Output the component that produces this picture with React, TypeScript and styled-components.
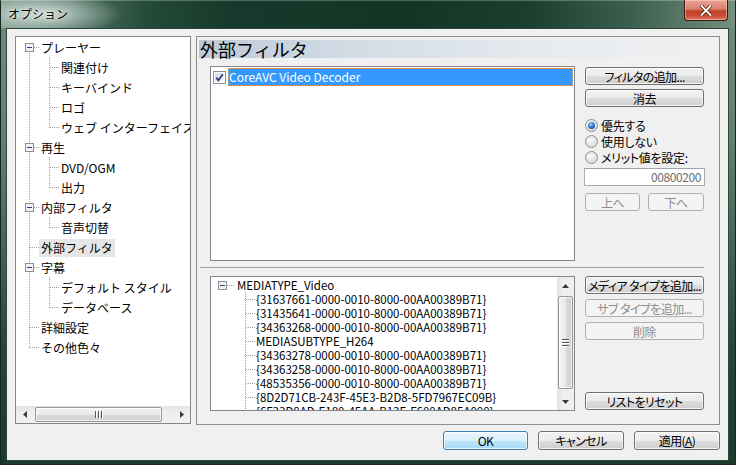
import React from 'react';
import styled, { createGlobalStyle } from 'styled-components';

const FONT = `"Noto Sans CJK JP", "Noto Sans", sans-serif`;

const GlobalStyle = createGlobalStyle`
  html, body { margin: 0; padding: 0; width: 736px; height: 465px; overflow: hidden; background: #1d3a2c; }
  * { box-sizing: border-box; }
`;

const Window = styled.div`
  width: 736px;
  height: 465px;
  display: flex;
  flex-direction: column;
  font-family: ${FONT};
  background: linear-gradient(180deg, #6f8b7d 0%, #62806f 30%, #416152 55%, #25453a 75%, #1b3a2c 100%);
  box-shadow: inset 0 0 0 1px #16281f;
`;

const TitleBar = styled.div`
  height: 28px;
  flex: none;
  display: flex;
  align-items: flex-start;
  justify-content: space-between;
  padding-left: 8px;
  background:
    radial-gradient(ellipse 80px 22px at 42px 14px, rgba(226, 236, 231, 0.85), rgba(226, 236, 231, 0) 100%),
    linear-gradient(90deg, #7d988b 0%, #57786a 9%, #244a39 20%, #15392a 32%, #123526 55%, #1a3f2f 72%, #3c6050 86%, #75907f 100%);
  box-shadow: inset 0 1px 0 rgba(255,255,255,0.25), inset 1px 0 0 #16281f, inset -1px 0 0 #16281f;
`;

const TitleText = styled.div`
  font-size: 12px;
  line-height: 28px;
  color: #000;
  text-shadow: 0 0 6px rgba(255,255,255,0.9), 0 0 2px rgba(255,255,255,0.8);
`;

const CloseButton = styled.div`
  width: 44px;
  height: 21px;
  margin-right: 8px;
  display: flex;
  align-items: center;
  justify-content: center;
  border: 1px solid #3e1610;
  border-top: none;
  border-radius: 0 0 4px 4px;
  background: linear-gradient(180deg, #e8a596 0%, #d8806c 45%, #c0412a 55%, #c94e32 80%, #d9806a 100%);
  box-shadow: inset 0 0 0 1px rgba(255, 220, 210, 0.45);
`;

const FrameBody = styled.div`
  flex: 1;
  display: flex;
  padding: 0 7px 4px 6px;
  min-height: 0;
`;

const Client = styled.div`
  flex: 1;
  display: flex;
  flex-direction: column;
  background: #f0f0f0;
  border: 1px solid #2f473b;
  padding: 7px 8px 0 8px;
`;

const PanelsRow = styled.div`
  display: flex;
  align-items: flex-start;
  gap: 5px;
  height: 389px;
`;

const LeftPanel = styled.div`
  width: 176px;
  height: 388px;
  display: flex;
  flex-direction: column;
  background: #fff;
  border: 1px solid #828790;
`;

const LeftTree = styled.div`
  flex: 1;
  overflow: hidden;
  padding-left: 3px;
`;

const LTreeRow = styled.div`
  display: flex;
  align-items: center;
  height: 20px;
  white-space: nowrap;
`;

const LLabel = styled.span<{ $selected?: boolean }>`
  font-size: 12px;
  line-height: 18px;
  height: 18px;
  padding: 0 2px;
  margin-top: 1px;
  color: #000;
  background: ${(p) => (p.$selected ? '#e6e6e6' : 'transparent')};
`;

const ConnSvg = styled.svg`
  display: block;
  flex: none;
`;

const HScroll = styled.div`
  height: 17px;
  flex: none;
  display: flex;
  align-items: center;
  background: linear-gradient(180deg, #e3e3e3 0%, #efefef 40%, #f0f0f0 100%);
`;

const ScrollArrow = styled.div<{ $w: number; $h: number }>`
  width: ${(p) => p.$w}px;
  height: ${(p) => p.$h}px;
  flex: none;
  display: flex;
  align-items: center;
  justify-content: center;
`;

const HThumb = styled.div`
  width: 127px;
  height: 15px;
  margin-left: 1px;
  border: 1px solid #979797;
  border-radius: 2px;
  background: linear-gradient(180deg, #f4f4f4 0%, #e9e9e9 50%, #d9d9d9 51%, #d2d2d2 100%);
  box-shadow: inset 0 0 0 1px rgba(255,255,255,0.7);
  display: flex;
  align-items: center;
  justify-content: center;
  gap: 2px;
`;

const VThumb = styled.div`
  width: 15px;
  height: 93px;
  margin: 2px auto 0;
  border: 1px solid #979797;
  border-radius: 2px;
  background: linear-gradient(90deg, #f4f4f4 0%, #e9e9e9 50%, #d9d9d9 51%, #d2d2d2 100%);
  box-shadow: inset 0 0 0 1px rgba(255,255,255,0.7);
  display: flex;
  flex-direction: column;
  align-items: center;
  justify-content: center;
  gap: 2px;
`;

const GripH = styled.span`
  width: 1px;
  height: 7px;
  background: #555;
  box-shadow: 1px 0 0 #fff;
`;

const GripV = styled.span`
  width: 7px;
  height: 1px;
  background: #555;
  box-shadow: 0 1px 0 #fff;
`;

const Flex1 = styled.div`
  flex: 1;
`;

const RightPanel = styled.div`
  width: 524px;
  height: 389px;
  border: 1px solid #8e8f8f;
  padding: 3px 2px 0 2px;
  display: flex;
  flex-direction: column;
`;

const Header = styled.div`
  height: 18px;
  font-size: 18px;
  line-height: 18px;
  padding-left: 1px;
  color: #000;
  background: linear-gradient(90deg, #bccad8 0%, #d3dce5 30%, #e8ecf0 70%, #f0f0f0 100%);
  white-space: nowrap;
`;

const Section = styled.div<{ $mt: number }>`
  display: flex;
  gap: 10px;
  padding-left: 11px;
  margin-top: ${(p) => p.$mt}px;
`;

const ListBox = styled.div<{ $h: number }>`
  width: 365px;
  height: ${(p) => p.$h}px;
  border: 1px solid #828790;
  background: #fff;
  display: flex;
  overflow: hidden;
`;

const FilterList = styled.div`
  flex: 1;
  padding-top: 1px;
`;

const FilterRow = styled.div`
  display: flex;
  align-items: center;
  height: 18px;
  padding-left: 2px;
  gap: 2px;
`;

const FilterLabel = styled.div`
  flex: 1;
  height: 18px;
  margin-right: 1px;
  background: #3399ff;
  color: #fff;
  border: 1px dotted #f2a45c;
  font-size: 12px;
  line-height: 16px;
  white-space: nowrap;
`;

const SideColumn = styled.div`
  width: 119px;
  display: flex;
  flex-direction: column;
`;

const Button = styled.div<{ $w?: number; $h?: number; $mt?: number; $disabled?: boolean; $focused?: boolean }>`
  width: ${(p) => p.$w ?? 119}px;
  height: ${(p) => p.$h ?? 18}px;
  margin-top: ${(p) => p.$mt ?? 0}px;
  flex: none;
  display: flex;
  align-items: center;
  justify-content: center;
  border-radius: 3px;
  font-size: 12px;
  font-feature-settings: "palt";
  letter-spacing: -0.6px;
  white-space: nowrap;
  border: 1px solid ${(p) => (p.$disabled ? '#adb2b5' : p.$focused ? '#3c7fb1' : '#707070')};
  color: ${(p) => (p.$disabled ? '#8d8d8d' : '#000')};
  background: ${(p) =>
    p.$disabled
      ? '#f4f4f4'
      : p.$focused
      ? 'linear-gradient(180deg, #eaf6fd 0%, #d9f0fc 50%, #bee6fd 51%, #a7d9f5 100%)'
      : 'linear-gradient(180deg, #f2f2f2 0%, #ebebeb 50%, #dddddd 51%, #cfcfcf 100%)'};
  box-shadow: ${(p) => (p.$disabled ? 'none' : 'inset 0 0 0 1px rgba(255,255,255,0.75)')};
`;

const RadioGroup = styled.div`
  margin-top: 10px;
  display: flex;
  flex-direction: column;
`;

const RadioRow = styled.div`
  display: flex;
  align-items: center;
  height: 16px;
  gap: 3px;
  font-size: 12px;
  font-feature-settings: "palt";
  letter-spacing: -0.3px;
  white-space: nowrap;
`;

const RadioCircle = styled.span<{ $checked?: boolean }>`
  width: 13px;
  height: 13px;
  flex: none;
  border-radius: 50%;
  border: 1px solid #8e8f8f;
  background: radial-gradient(circle at 35% 35%, #f8f8f8 0%, #e4e4e4 55%, #cfcfcf 100%);
  display: flex;
  align-items: center;
  justify-content: center;
  &::after {
    content: '';
    width: 7px;
    height: 7px;
    border-radius: 50%;
    display: ${(p) => (p.$checked ? 'block' : 'none')};
    background: radial-gradient(circle at 40% 35%, #a9d8f8 0%, #2d78c8 45%, #0d3f8a 100%);
  }
`;

const EditBox = styled.div`
  width: 121px;
  height: 18px;
  margin: 3px 0 0 -1px;
  border: 1px solid #abadb3;
  border-top-color: #a0a3aa;
  background: #fff;
  color: #6d6d6d;
  font-size: 12px;
  line-height: 16px;
  text-align: right;
  padding-right: 3px;
  letter-spacing: -0.4px;
`;

const MoveRow = styled.div`
  display: flex;
  gap: 8px;
  margin-top: 7px;
`;

const Separator = styled.div`
  margin: 6px 0 0 1px;
  width: 504px;
  height: 1px;
  background: #a0a0a0;
`;

const BTree = styled.div`
  flex: 1;
  padding-top: 1px;
  overflow: hidden;
`;

const BTreeRow = styled.div`
  display: flex;
  align-items: center;
  height: 14px;
  white-space: nowrap;
`;

const BLabel = styled.span<{ $ml: number }>`
  margin-left: ${(p) => p.$ml}px;
  font-size: 11.5px;
  line-height: 14px;
  color: #000;
`;

const BSpacer = styled.span`
  width: 23px;
  flex: none;
`;

const VScroll = styled.div`
  width: 17px;
  flex: none;
  display: flex;
  flex-direction: column;
  background: linear-gradient(90deg, #e3e3e3 0%, #efefef 40%, #f0f0f0 100%);
`;

const BottomSide = styled(SideColumn)`
  height: 135px;
`;

const ResetButton = styled(Button)`
  margin-top: auto;
  margin-bottom: 1px;
`;

const ButtonsRow = styled.div`
  display: flex;
  justify-content: flex-end;
  gap: 10px;
  margin-top: 6px;
`;

type ConnProps = { w: number; h: number; cx: number; top?: boolean; bottom?: boolean; horiz?: boolean; box?: boolean };

const Conn: React.FC<ConnProps> = ({ w, h, cx, top, bottom, horiz, box }) => {
  const cy = Math.floor(h / 2);
  const y1 = top ? 0 : cy - (cy % 2);
  const y2 = bottom ? h : cy + 1;
  const stroke = '#a0a0a0';
  return (
    <ConnSvg width={w} height={h} viewBox={`0 0 ${w} ${h}`} shapeRendering="crispEdges">
      {(top || bottom) && (
        <line x1={cx + 0.5} y1={y1} x2={cx + 0.5} y2={y2} stroke={stroke} strokeDasharray="1 1" />
      )}
      {horiz && <line x1={cx + 1} y1={cy + 0.5} x2={w} y2={cy + 0.5} stroke={stroke} strokeDasharray="1 1" />}
      {box && (
        <>
          <rect x={cx - 4 + 0.5} y={cy - 4 + 0.5} width={8} height={8} fill="#f1f1f1" stroke="#8f8f8f" />
          <line x1={cx - 2} y1={cy + 0.5} x2={cx + 3} y2={cy + 0.5} stroke="#24418a" />
        </>
      )}
    </ConnSvg>
  );
};

const CheckBox: React.FC = () => (
  <ConnSvg width={13} height={13} viewBox="0 0 13 13">
    <defs>
      <linearGradient id="cbg" x1="0" y1="0" x2="1" y2="1">
        <stop offset="0" stopColor="#d8d8d8" />
        <stop offset="1" stopColor="#fbfbfb" />
      </linearGradient>
    </defs>
    <rect x="0.5" y="0.5" width="12" height="12" fill="#fff" stroke="#8e8f8f" />
    <rect x="2" y="2" width="9" height="9" fill="url(#cbg)" />
    <path d="M3.2 6.6 L5.4 9.2 L9.8 3.2" fill="none" stroke="#27398a" strokeWidth="1.8" />
  </ConnSvg>
);

const Tri: React.FC<{ dir: 'left' | 'right' | 'up' | 'down' }> = ({ dir }) => {
  const pts =
    dir === 'left'
      ? '4,0 0,3.5 4,7'
      : dir === 'right'
      ? '0,0 4,3.5 0,7'
      : dir === 'up'
      ? '0,4 3.5,0 7,4'
      : '0,0 3.5,4 7,0';
  const w = dir === 'left' || dir === 'right' ? 4 : 7;
  const h = dir === 'left' || dir === 'right' ? 7 : 4;
  return (
    <ConnSvg width={w} height={h} viewBox={`0 0 ${w} ${h}`}>
      <polygon points={pts} fill="#3c3c3c" />
    </ConnSvg>
  );
};

type LItem = { label: string; level: 0 | 1; box?: boolean; first?: boolean; last?: boolean; lastChild?: boolean; selected?: boolean };

const leftItems: LItem[] = [
  { label: 'プレーヤー', level: 0, box: true, first: true },
  { label: '関連付け', level: 1 },
  { label: 'キーバインド', level: 1 },
  { label: 'ロゴ', level: 1 },
  { label: 'ウェブ インターフェイス', level: 1, lastChild: true },
  { label: '再生', level: 0, box: true },
  { label: 'DVD/OGM', level: 1 },
  { label: '出力', level: 1, lastChild: true },
  { label: '内部フィルタ', level: 0, box: true },
  { label: '音声切替', level: 1, lastChild: true },
  { label: '外部フィルタ', level: 0, selected: true },
  { label: '字幕', level: 0, box: true },
  { label: 'デフォルト スタイル', level: 1 },
  { label: 'データベース', level: 1, lastChild: true },
  { label: '詳細設定', level: 0 },
  { label: 'その他色々', level: 0, last: true },
];

const subtypes = [
  '{31637661-0000-0010-8000-00AA00389B71}',
  '{31435641-0000-0010-8000-00AA00389B71}',
  '{34363268-0000-0010-8000-00AA00389B71}',
  'MEDIASUBTYPE_H264',
  '{34363278-0000-0010-8000-00AA00389B71}',
  '{34363258-0000-0010-8000-00AA00389B71}',
  '{48535356-0000-0010-8000-00AA00389B71}',
  '{8D2D71CB-243F-45E3-B2D8-5FD7967EC09B}',
  '{6F33D8AD-E180-45AA-B13E-F600AD85A000}',
];

export default function App() {
  return (
    <>
      <GlobalStyle />
      <Window>
        <TitleBar>
          <TitleText>オプション</TitleText>
          <CloseButton>
            <ConnSvg width={12} height={11} viewBox="0 0 12 11">
              <path d="M1.5 1 L10.5 10 M10.5 1 L1.5 10" stroke="#5a1a10" strokeWidth="3.4" strokeLinecap="square" />
              <path d="M1.5 1 L10.5 10 M10.5 1 L1.5 10" stroke="#ffffff" strokeWidth="1.8" strokeLinecap="square" />
            </ConnSvg>
          </CloseButton>
        </TitleBar>
        <FrameBody>
          <Client>
            <PanelsRow>
              <LeftPanel>
                <LeftTree>
                  {leftItems.map((it) => (
                    <LTreeRow key={it.label}>
                      {it.level === 0 ? (
                        <Conn w={20} h={20} cx={10} top={!it.first} bottom={!it.last} horiz box={it.box} />
                      ) : (
                        <>
                          <Conn w={20} h={20} cx={10} top bottom />
                          <Conn w={20} h={20} cx={10} top bottom={!it.lastChild} horiz />
                        </>
                      )}
                      <LLabel $selected={it.selected}>{it.label}</LLabel>
                    </LTreeRow>
                  ))}
                </LeftTree>
                <HScroll>
                  <ScrollArrow $w={18} $h={17}>
                    <Tri dir="left" />
                  </ScrollArrow>
                  <HThumb>
                    <GripH />
                    <GripH />
                    <GripH />
                  </HThumb>
                  <Flex1 />
                  <ScrollArrow $w={17} $h={17}>
                    <Tri dir="right" />
                  </ScrollArrow>
                </HScroll>
              </LeftPanel>

              <RightPanel>
                <Header>外部フィルタ</Header>
                <Section $mt={8}>
                  <ListBox $h={195}>
                    <FilterList>
                      <FilterRow>
                        <CheckBox />
                        <FilterLabel>CoreAVC Video Decoder</FilterLabel>
                      </FilterRow>
                    </FilterList>
                  </ListBox>
                  <SideColumn>
                    <Button $mt={1}>フィルタの追加...</Button>
                    <Button $mt={4}>消去</Button>
                    <RadioGroup>
                      <RadioRow>
                        <RadioCircle $checked />
                        優先する
                      </RadioRow>
                      <RadioRow>
                        <RadioCircle />
                        使用しない
                      </RadioRow>
                      <RadioRow>
                        <RadioCircle />
                        メリット値を設定:
                      </RadioRow>
                    </RadioGroup>
                    <EditBox>00800200</EditBox>
                    <MoveRow>
                      <Button $w={55} $disabled>
                        上へ
                      </Button>
                      <Button $w={56} $disabled>
                        下へ
                      </Button>
                    </MoveRow>
                  </SideColumn>
                </Section>
                <Separator />
                <Section $mt={8}>
                  <ListBox $h={135}>
                    <BTree>
                      <BTreeRow>
                        <Conn w={23} h={14} cx={11} horiz box />
                        <BLabel $ml={3}>MEDIATYPE_Video</BLabel>
                      </BTreeRow>
                      {subtypes.map((s) => (
                        <BTreeRow key={s}>
                          <BSpacer />
                          <Conn w={21} h={14} cx={11} top bottom horiz />
                          <BLabel $ml={1}>{s}</BLabel>
                        </BTreeRow>
                      ))}
                    </BTree>
                    <VScroll>
                      <ScrollArrow $w={17} $h={17}>
                        <Tri dir="up" />
                      </ScrollArrow>
                      <VThumb>
                        <GripV />
                        <GripV />
                        <GripV />
                      </VThumb>
                      <Flex1 />
                      <ScrollArrow $w={17} $h={17}>
                        <Tri dir="down" />
                      </ScrollArrow>
                    </VScroll>
                  </ListBox>
                  <BottomSide>
                    <Button>メディア タイプを追加...</Button>
                    <Button $mt={5} $disabled>
                      サブ タイプを追加...
                    </Button>
                    <Button $mt={5} $disabled>
                      削除
                    </Button>
                    <ResetButton>リストをリセット</ResetButton>
                  </BottomSide>
                </Section>
              </RightPanel>
            </PanelsRow>
            <ButtonsRow>
              <Button $w={85} $h={19} $focused>
                OK
              </Button>
              <Button $w={86} $h={19}>
                キャンセル
              </Button>
              <Button $w={86} $h={19}>
                適用(<u>A</u>)
              </Button>
            </ButtonsRow>
          </Client>
        </FrameBody>
      </Window>
    </>
  );
}
